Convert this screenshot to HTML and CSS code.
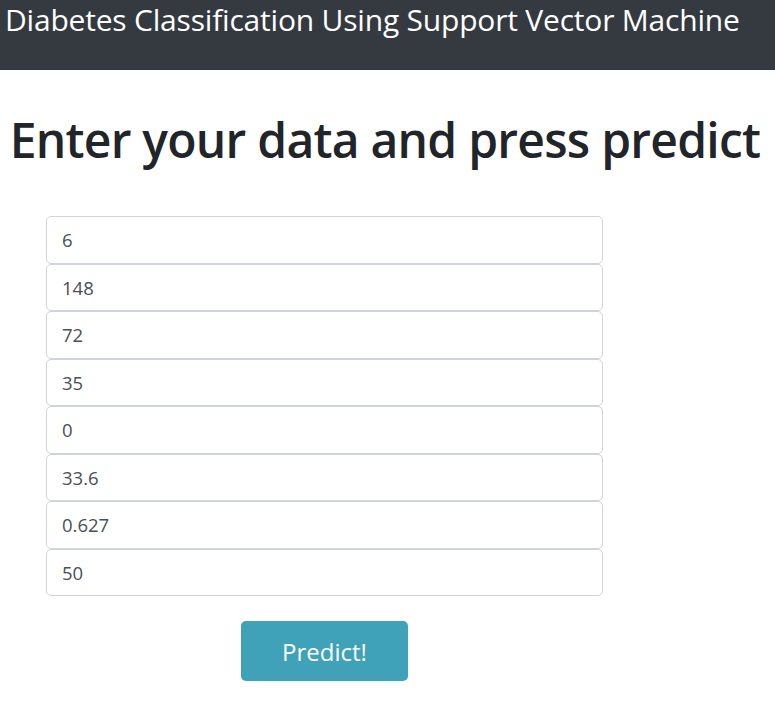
FILE: index.html
```html
<!DOCTYPE html>
<html>
<head>
<meta charset="utf-8">
<link rel="stylesheet" href="styles.css">
</head>
<body>
<header class="topbar">
  <div class="brand">Diabetes Classification Using Support Vector Machine</div>
</header>
<main class="page">
  <h1 class="title">Enter your data and press predict</h1>
  <form class="form">
    <div class="fields">
      <input class="field" type="text" value="6">
      <input class="field" type="text" value="148">
      <input class="field" type="text" value="72">
      <input class="field" type="text" value="35">
      <input class="field" type="text" value="0">
      <input class="field" type="text" value="33.6">
      <input class="field" type="text" value="0.627">
      <input class="field" type="text" value="50">
    </div>
    <button class="btn" type="button">Predict!</button>
  </form>
</main>
</body>
</html>
```
FILE: styles.css
```css
* { box-sizing: border-box; }
body {
  margin: 0;
  font-family: "Open Sans", "Noto Sans", sans-serif;
  color: #212529;
  background: #fff;
}
.topbar {
  height: 70px;
  background: #343a40;
  padding: 0 0 0 5px;
}
.brand {
  color: #fff;
  font-size: 30px;
  line-height: 40px;
  letter-spacing: -0.2px;
  white-space: nowrap;
}
.page {
  display: flex;
  flex-direction: column;
}
.title {
  margin: 40px 5px 0 0;
  text-align: center;
  font-size: 48px;
  font-weight: 600;
  line-height: 60px;
  letter-spacing: -0.75px;
  white-space: nowrap;
}
.form {
  margin: 46px 0 0 46px;
  width: 557px;
  display: flex;
  flex-direction: column;
  align-items: center;
}
.fields {
  width: 100%;
  display: flex;
  flex-direction: column;
}
.field {
  height: 47.5px;
  width: 100%;
  border: 1px solid #ced4da;
  border-radius: 5px;
  padding: 0 15px;
  font-family: inherit;
  font-size: 18.5px;
  color: #495057;
  background: #fff;
  outline: none;
}
.btn {
  margin-top: 25px;
  width: 167px;
  height: 60px;
  border: none;
  border-radius: 5px;
  background: #3fa2b8;
  color: #fff;
  font-family: inherit;
  font-size: 24px;
  cursor: pointer;
}
```
